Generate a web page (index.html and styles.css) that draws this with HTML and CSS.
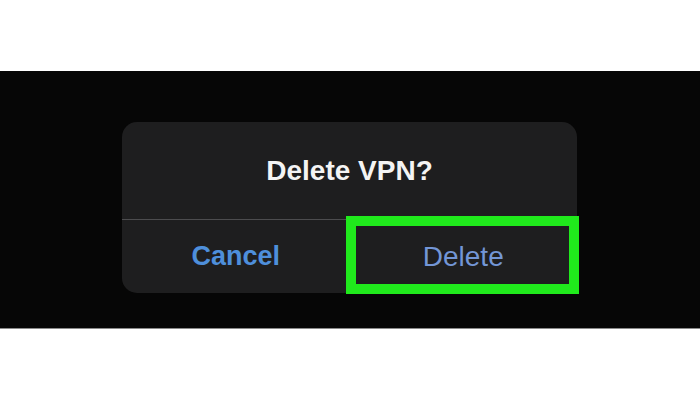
FILE: index.html
```html
<!DOCTYPE html>
<html>
<head>
<meta charset="utf-8">
<link rel="stylesheet" href="styles.css">
</head>
<body>
<div class="page">
  <div class="top"></div>
  <div class="band">
    <div class="dialog">
      <div class="title">Delete VPN?</div>
      <div class="actions">
        <div class="btn cancel">Cancel</div>
        <div class="btn delete">Delete</div>
      </div>
      <div class="highlight"></div>
    </div>
  </div>
</div>
</body>
</html>
```
FILE: styles.css
```css
html, body {
  margin: 0;
  padding: 0;
  background: #ffffff;
}
.page {
  width: 700px;
  height: 400px;
  display: flex;
  flex-direction: column;
  font-family: "Liberation Sans", Arial, sans-serif;
}
.top {
  height: 71px;
}
.band {
  height: 258px;
  background: #060606;
  border-bottom: 1px solid #8a8a8a;
  padding-top: 51px;
  box-sizing: border-box;
}
.dialog {
  position: relative;
  margin-left: 122px;
  width: 455px;
  height: 171px;
  background: #1e1e1f;
  border-radius: 15px;
  display: flex;
  flex-direction: column;
}
.title {
  height: 97px;
  border-bottom: 1px solid #4c4c4e;
  display: flex;
  align-items: center;
  justify-content: center;
  color: #f4f4f4;
  font-size: 28px;
  font-weight: 700;
}
.actions {
  flex: 1;
  display: grid;
  grid-template-columns: 1fr 1fr;
}
.btn {
  display: flex;
  align-items: center;
  justify-content: center;
  font-size: 28px;
}
.cancel {
  color: #4e8fdb;
  font-weight: 700;
  font-size: 27px;
}
.delete {
  color: #7396d6;
}
.highlight {
  position: absolute;
  left: 224px;
  top: 94px;
  width: 233px;
  height: 78px;
  box-sizing: border-box;
  border: 10px solid #20ea1c;
}
```
